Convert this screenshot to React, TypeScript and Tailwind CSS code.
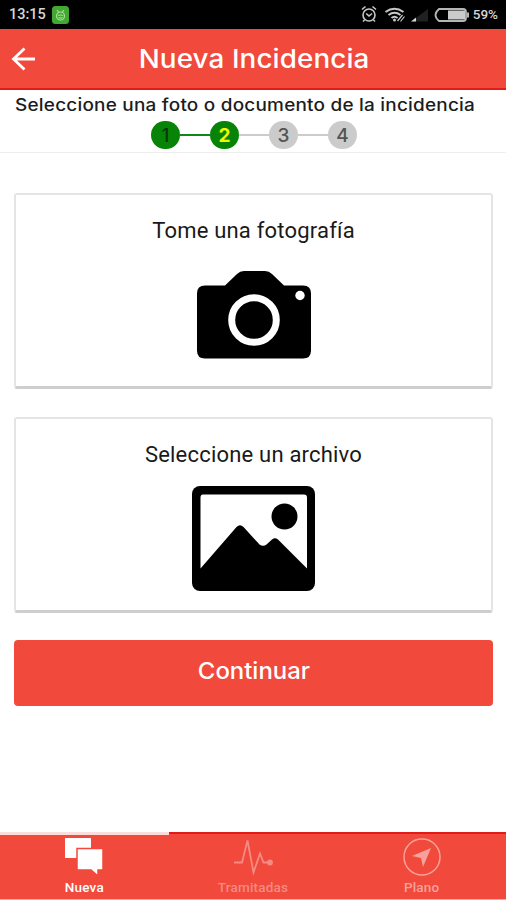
import { clsx } from "clsx"

const steps = [1, 2, 3, 4]
const currentStep = 2

function StatusBar() {
  return (
    <div className="flex h-[29px] items-center bg-black pl-[9px] pr-2 font-['Roboto',sans-serif] font-medium text-[#d6d6d6]">
      <span className="pt-px text-[14.5px] leading-none">13:15</span>
      <svg className="ml-[6px]" width="17" height="18" viewBox="0 0 17 18">
        <rect width="17" height="18" rx="3.5" fill="#43a832" />
        <g fill="none" stroke="#a9dc9c" strokeWidth="1.2">
          <circle cx="8.5" cy="10" r="4" />
          <path d="M5 4l2 2.500M12 4l-2 2.500M6 9.500q2.500-1 5 0M6.500 11.500q2 1 4 0" />
        </g>
      </svg>
      <svg className="ml-auto" width="110" height="20" viewBox="0 0 110 20">
        {/* alarm */}
        <g fill="none" stroke="#c8c8c8" strokeWidth="1.6">
          <circle cx="9" cy="10" r="6" />
          <path d="M2 4.500l3.500-3M16 4.500l-3.500-3M6.200 8.500l2.800 2.500 3-2.500M4.500 15l-1.500 1.500M13.500 15l1.500 1.500" />
        </g>
        {/* wifi */}
        <g fill="none" stroke="#c8c8c8" strokeWidth="2">
          <path d="M25.500 7q9-6.500 18 0" />
          <path d="M28.500 10q6-4.500 12 0" />
          <path d="M31.500 13q3-2.500 6 0" />
          <path d="M37.500 16l5-6M40.500 16.500l4-5" strokeWidth="1.200" />
        </g>
        <circle cx="34.500" cy="15" r="1.500" fill="#c8c8c8" />
        {/* signal */}
        <path d="M51 16.500L68 4v12.500z" fill="#202020" />
        <path d="M51 16.500l5-4v4z" fill="#d6d6d6" />
        {/* battery */}
        <path d="M79 4h24q3 0 3 3v6q0 3-3 3H79q-3.500-3-3.500-6t3.500-6z" fill="none" stroke="#b5b5b5" strokeWidth="1.800" />
        <path d="M88 5.500h17v9H88z" fill="#cbcbcb" />
        <path d="M107 7.500h2v5h-2z" fill="#b5b5b5" />
      </svg>
      <span className="ml-[3px] text-[13.5px] leading-none">59%</span>
    </div>
  )
}

function Header() {
  return (
    <header className="grid h-[61px] grid-cols-[50px_1fr_50px] items-center border-b-2 border-[#e31b18] bg-[#f1493b] text-white">
      <svg className="ml-[11px] mt-px" width="25" height="24" viewBox="0 0 25 24" fill="none" stroke="currentColor" strokeWidth="2.800">
        <path d="M13.500 1.500L2.500 12l11 10.500M2.500 12h21.500" />
      </svg>
      <h1 className="mt-px scale-x-[1.07] whitespace-nowrap pl-[2px] text-center text-[26px] font-medium leading-none tracking-[0.1px]">
        Nueva Incidencia
      </h1>
    </header>
  )
}

function Stepper() {
  return (
    <section className="h-[63px] border-b border-[#eeeeee] pt-[5px]">
      <p className="ml-[15px] origin-left scale-x-[1.114] whitespace-nowrap text-[17px] font-medium leading-[20px] tracking-[0.2px] text-[#1c1c1c]">
        Seleccione una foto o documento de la incidencia
      </p>
      <div className="mt-[6px] flex items-center justify-center pl-[2px]">
        {steps.map((step) => (
          <div key={step} className="flex items-center">
            {step > 1 && (
              <div className={clsx("h-[2px] w-[30px]", step <= currentStep ? "bg-[#128512]" : "bg-[#cccccc]")} />
            )}
            <div
              className={clsx(
                "flex h-[28px] w-[29px] items-center justify-center rounded-full pt-px text-[19px] leading-none",
                step < currentStep && "bg-[#078407] font-medium text-[#06390a]",
                step === currentStep && "bg-[#078407] font-bold text-[#efff00]",
                step > currentStep && "bg-[#cbcbcb] font-medium text-[#535353]",
              )}
            >
              {step}
            </div>
          </div>
        ))}
      </div>
    </section>
  )
}

function CameraIcon() {
  return (
    <svg className="mt-[25px]" width="116" height="88" viewBox="0 0 116 88">
      <path
        d="M9 14.500h20l12-11.500q3-3 7-3h21q4 0 7 3l12 11.500h19q8 0 8 8v57q0 8-8 8H9q-8 0-8-8v-57q0-8 8-8z"
        fill="#000"
      />
      <circle cx="58" cy="49" r="22.300" fill="none" stroke="#fff" strokeWidth="7" />
      <circle cx="104" cy="24.500" r="4.700" fill="#fff" />
    </svg>
  )
}

function PictureIcon() {
  return (
    <svg className="mt-[16px]" width="123" height="106" viewBox="0 0 123 106">
      <rect width="123" height="105" rx="8" fill="#000" />
      <path
        d="M11 8.500h101q3 0 3 3v71L86 53.500q-3-2.500-6 0l-5.500 5q-3.500 2.500-7 0L51.500 41q-3.500-3.500-7 0L8.500 82.500v-71q0-3 2.500-3z"
        fill="#fff"
      />
      <circle cx="92.500" cy="30.500" r="13" fill="#000" />
    </svg>
  )
}

function OptionCard({ title, children }: { title: string; children: React.ReactNode }) {
  return (
    <button className="flex h-[196px] w-full flex-col items-center rounded-[3px] border-2 border-b-[3px] border-[#e5e5e5] border-b-[#cecece] bg-white pt-[21px] font-['Roboto',sans-serif] text-[#191919]">
      <span className="text-[22px] leading-[30px] tracking-[0.2px]">{title}</span>
      {children}
    </button>
  )
}

function BottomTabs() {
  return (
    <nav className="mt-auto grid h-[68px] grid-cols-3 border-b border-[#f6aaa4] bg-[#f1493b] font-['Roboto',sans-serif] text-[13.5px] font-medium leading-[15px] text-white">
      <div className="flex flex-col items-center border-t-[3px] border-[#fbdedb] pt-[3px]">
        <svg width="40" height="40" viewBox="0 0 40 40">
          <path d="M1 0h26v20H1z" fill="#fff" />
          <path d="M13 10.500h26v21.500h-5v6l-7-6H13z" fill="#fff" stroke="#f1493b" strokeWidth="1.500" />
        </svg>
        <span className="mt-[2px] tracking-[0.2px]">Nueva</span>
      </div>
      <div className="flex flex-col items-center border-t-2 border-[#e31b18] pt-1 text-[#f58b82]">
        <svg width="40" height="40" viewBox="0 0 40 40" fill="none" stroke="currentColor" strokeWidth="1.800">
          <path d="M1 24.500h8l5.500-22 6 32 6.500-19 3.500 9h7" />
          <circle cx="37" cy="24.500" r="2" fill="currentColor" />
        </svg>
        <span className="mt-[2px] tracking-[0.2px]">Tramitadas</span>
      </div>
      <div className="flex flex-col items-center border-t-2 border-[#e31b18] pt-1 text-[#f7a19a]">
        <svg width="40" height="40" viewBox="0 0 40 40">
          <circle cx="20" cy="19" r="18" fill="none" stroke="currentColor" strokeWidth="1.500" />
          <path d="M29 10L10 18l9 2 2 9z" fill="currentColor" />
        </svg>
        <span className="mt-[2px] tracking-[0.2px]">Plano</span>
      </div>
    </nav>
  )
}

export default function App() {
  return (
    <div className="flex h-[900px] w-[506px] flex-col overflow-hidden bg-white font-['Inter',sans-serif]">
      <StatusBar />
      <Header />
      <Stepper />
      <main className="flex flex-col gap-7 pl-[14px] pr-[13px] pt-[40px]">
        <OptionCard title="Tome una fotografía">
          <CameraIcon />
        </OptionCard>
        <OptionCard title="Seleccione un archivo">
          <PictureIcon />
        </OptionCard>
        <button className="-mt-px h-[66px] rounded-[4px] bg-[#f1493b] pb-[3px] text-[23px] font-medium text-white">
          <span className="inline-block scale-x-[1.04]">Continuar</span>
        </button>
      </main>
      <BottomTabs />
    </div>
  )
}
